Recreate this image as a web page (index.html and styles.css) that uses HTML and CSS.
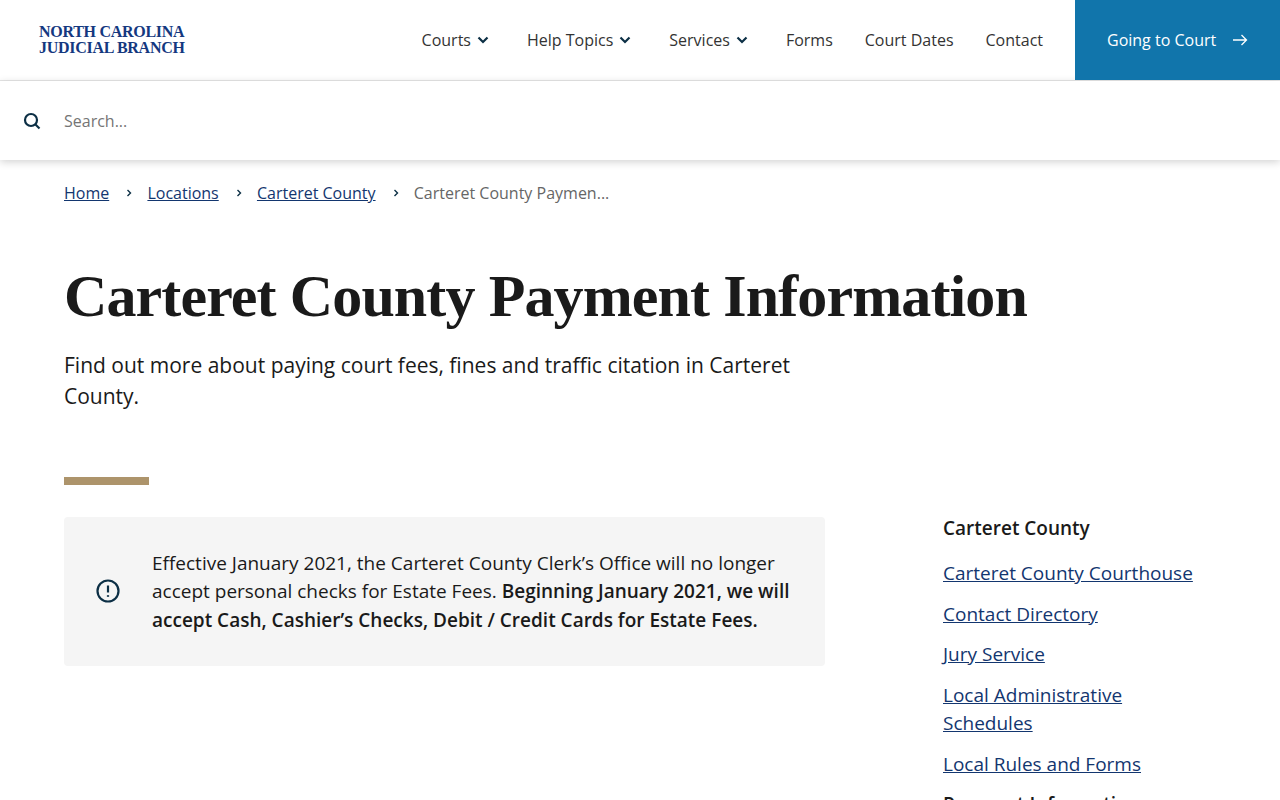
FILE: index.html
```html
<!DOCTYPE html>
<html lang="en">
<head>
<meta charset="utf-8">
<title>Carteret County Payment Information</title>
<link rel="stylesheet" href="styles.css">
</head>
<body>
<header class="header">
  <a class="logo" href="#"><span>NORTH CAROLINA</span><span>JUDICIAL BRANCH</span></a>
  <nav class="nav">
    <a class="nav-item" href="#">Courts<svg class="chev" viewBox="0 0 12 8"><path d="M1.5 1.5 6 6l4.5-4.5"/></svg></a>
    <a class="nav-item" href="#">Help Topics<svg class="chev" viewBox="0 0 12 8"><path d="M1.5 1.5 6 6l4.5-4.5"/></svg></a>
    <a class="nav-item" href="#">Services<svg class="chev" viewBox="0 0 12 8"><path d="M1.5 1.5 6 6l4.5-4.5"/></svg></a>
    <a class="nav-item" href="#">Forms</a>
    <a class="nav-item" href="#">Court Dates</a>
    <a class="nav-item" href="#">Contact</a>
  </nav>
  <a class="cta" href="#">Going to Court<svg class="arrow" viewBox="0 0 16 12"><path d="M1 6h13.5M9.5 1l5 5-5 5"/></svg></a>
</header>
<div class="search">
  <svg class="search-icon" viewBox="0 0 18 18"><circle cx="8" cy="8" r="6"/><path d="m12.5 12.5 4 4"/></svg>
  <span class="search-text">Search...</span>
</div>
<main class="main">
  <ol class="crumbs">
    <li><a href="#">Home</a></li>
    <li class="sep"><svg viewBox="0 0 6 8"><path d="m1.5 1 3 3-3 3"/></svg></li>
    <li><a href="#">Locations</a></li>
    <li class="sep"><svg viewBox="0 0 6 8"><path d="m1.5 1 3 3-3 3"/></svg></li>
    <li><a href="#">Carteret County</a></li>
    <li class="sep"><svg viewBox="0 0 6 8"><path d="m1.5 1 3 3-3 3"/></svg></li>
    <li class="current">Carteret County Paymen...</li>
  </ol>
  <h1 class="title">Carteret County Payment Information</h1>
  <p class="lede">Find out more about paying court fees, fines and traffic citation in Carteret County.</p>
  <div class="rule"></div>
  <div class="columns">
    <div class="alert">
      <svg class="alert-icon" viewBox="0 0 24 24"><circle cx="12" cy="12" r="10.5"/><path d="M12 6.5v7"/><path d="M12 16.2v1.6"/></svg>
      <p class="alert-text">Effective January 2021, the Carteret County Clerk’s Office will no longer accept personal checks for Estate Fees. <strong>Beginning January 2021, we will accept Cash, Cashier’s Checks, Debit / Credit Cards for Estate Fees.</strong></p>
    </div>
    <aside class="side">
      <h2 class="side-title">Carteret County</h2>
      <ul class="side-list">
        <li><a href="#">Carteret County Courthouse</a></li>
        <li><a href="#">Contact Directory</a></li>
        <li><a href="#">Jury Service</a></li>
        <li><a href="#">Local Administrative Schedules</a></li>
        <li><a href="#">Local Rules and Forms</a></li>
        <li class="side-current">Payment Information</li>
      </ul>
    </aside>
  </div>
</main>
</body>
</html>
```
FILE: styles.css
```css
* { box-sizing: border-box; }
html, body { height: 800px; overflow: hidden; }
body {
  margin: 0;
  background: #fff;
  color: #1a1a1a;
  font-family: "Open Sans", sans-serif;
  font-size: 16px;
}
a { color: #13366f; }
.header {
  display: flex;
  align-items: center;
  height: 81px;
  border-bottom: 1px solid #e6e6e6;
  padding-left: 39px;
}
.logo {
  display: flex;
  flex-direction: column;
  font-family: "Liberation Serif", serif;
  font-weight: 700;
  font-size: 16px;
  line-height: 16px;
  color: #14387f;
  text-decoration: none;
  letter-spacing: -0.28px;
}
.nav {
  display: flex;
  align-items: center;
  gap: 32px;
  margin-left: auto;
  margin-right: 32px;
}
.nav-item {
  display: flex;
  align-items: center;
  color: #333;
  text-decoration: none;
  line-height: 24px;
}
.chev {
  width: 12px;
  height: 8px;
  margin-left: 6px;
  margin-right: 6px;
  fill: none;
  stroke: #0c2f45;
  stroke-width: 2.2;
}
.cta {
  display: flex;
  align-items: center;
  justify-content: space-between;
  width: 205px;
  height: 80px;
  align-self: flex-start;
  padding: 0 32px;
  background: #1175ab;
  color: #fff;
  text-decoration: none;
}
.arrow {
  width: 16px;
  height: 12px;
  fill: none;
  stroke: #fff;
  stroke-width: 1.3;
}
.search {
  display: flex;
  align-items: center;
  height: 79px;
  padding-left: 23px;
  box-shadow: 0 2px 8px rgba(0, 0, 0, .18);
}
.search-icon {
  width: 18px;
  height: 18px;
  fill: none;
  stroke: #0c2f45;
  stroke-width: 2.2;
}
.search-text {
  margin-left: 23px;
  color: #757575;
}
.main { padding: 0 64px; }
.crumbs {
  display: flex;
  align-items: center;
  list-style: none;
  margin: 0;
  padding: 21px 0 0;
  line-height: 24px;
}
.sep { display: flex; margin: 0 14px 0 16.2px; }
.sep svg {
  width: 8px;
  height: 8px;
  fill: none;
  stroke: #0c2f45;
  stroke-width: 1.4;
}
.current { color: #666; }
.title {
  margin: 53px 0 0;
  font-family: "Liberation Serif", serif;
  font-size: 60px;
  line-height: 76px;
  font-weight: 700;
  letter-spacing: -0.88px;
  color: #1a1a1a;
}
.lede {
  width: 760px;
  margin: 16px 0 0;
  font-size: 21px;
  line-height: 31px;
}
.rule {
  width: 85px;
  height: 8px;
  margin-top: 65px;
  background: #ad946b;
}
.columns {
  display: flex;
  justify-content: space-between;
  margin-top: 32px;
}
.alert {
  display: flex;
  align-items: center;
  gap: 32px;
  width: 761px;
  height: 149px;
  padding: 0 32px;
  background: #f5f5f5;
  border-radius: 4px;
}
.alert-icon {
  flex: none;
  width: 24px;
  height: 24px;
  margin-bottom: 1px;
  fill: none;
  stroke: #0c2f45;
  stroke-width: 2.2;
}
.alert-text {
  margin: 0;
  font-size: 19px;
  line-height: 28.5px;
}
.alert-text strong { font-weight: 600; }
.side { width: 273px; margin-top: -3px; }
.side-title {
  margin: 0;
  font-size: 19px;
  line-height: 28px;
  font-weight: 600;
}
.side-list {
  list-style: none;
  margin: 17px 0 0;
  padding: 0;
  font-size: 19px;
  line-height: 28.5px;
}
.side-list li { margin-bottom: 12px; }
.side-current { font-weight: 600; }
```
